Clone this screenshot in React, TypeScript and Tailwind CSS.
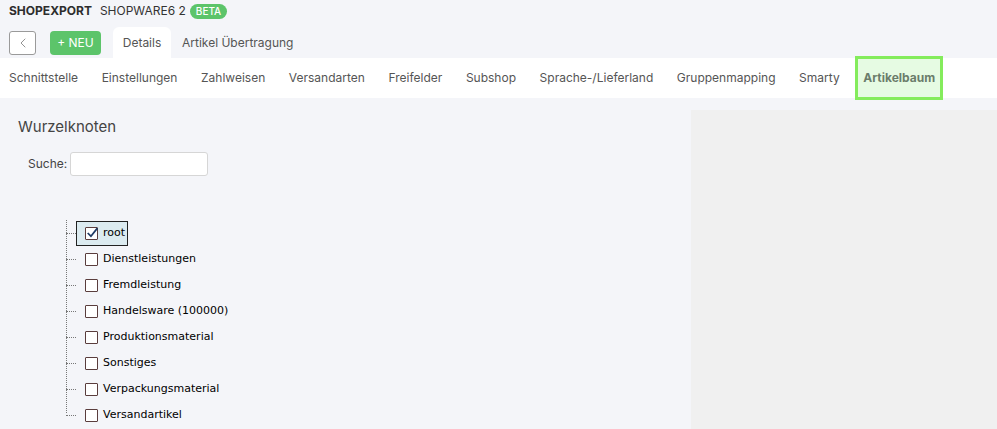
import { ChevronLeft } from "lucide-react";

const tabs = [
  "Schnittstelle",
  "Einstellungen",
  "Zahlweisen",
  "Versandarten",
  "Freifelder",
  "Subshop",
  "Sprache-/Lieferland",
  "Gruppenmapping",
  "Smarty",
];

const nodes = [
  "Dienstleistungen",
  "Fremdleistung",
  "Handelsware (100000)",
  "Produktionsmaterial",
  "Sonstiges",
  "Verpackungsmaterial",
  "Versandartikel",
];

const Box = ({ checked }: { checked?: boolean }) => (
  <span className="relative inline-block w-[13px] h-[13px] border border-[#5a3d3d] bg-white rounded-[1px] shrink-0">
    {checked && (
      <svg viewBox="0 0 13 13" className="absolute -left-px -top-[2px] w-[14px] h-[14px]">
        <path d="M2.5 6.5 L5.5 9.5 L11.5 2" fill="none" stroke="#1f3b64" strokeWidth="1.6" />
      </svg>
    )}
  </span>
);

export default function App() {
  return (
    <div className="w-[997px] h-[429px] overflow-hidden bg-[#f4f5f9] font-['Inter',sans-serif] text-[#333]">
      {/* Title */}
      <div className="flex items-center h-[21px] pl-[9px] pt-[1px] text-[12px]">
        <span className="font-bold text-[#2d2d2d]">SHOPEXPORT</span>
        <span className="ml-[8px] text-[#333]">SHOPWARE6 2</span>
        <span className="ml-[4px] rounded-full bg-[#5cc46a] px-[6px] h-[15px] leading-[15px] text-[10px] font-medium text-white">
          BETA
        </span>
      </div>

      {/* Toolbar */}
      <div className="flex items-end h-[37px] pl-[9px]">
        <div className="flex items-center mb-[3px]">
          <button className="w-[27px] h-[24px] flex items-center justify-center border border-[#9a9a9a] rounded-[3px] bg-white text-[#777]">
            <ChevronLeft className="w-[16px] h-[16px]" strokeWidth={1.2} />
          </button>
          <button className="ml-[14px] w-[51px] h-[24px] rounded-[4px] bg-[#5cc46a] text-white text-[12px]">
            + NEU
          </button>
        </div>
        <div className="ml-[12px] h-[31px] w-[58px] bg-white rounded-t-[6px] flex items-center justify-center text-[12px] text-[#555]">
          Details
        </div>
        <div className="ml-[11px] h-[31px] flex items-center text-[12px] text-[#555]">
          Artikel Übertragung
        </div>
      </div>

      {/* Tab bar */}
      <div className="h-[40px] bg-white flex items-center pl-[9px] gap-[23.6px] text-[12px] text-[#555]">
        {tabs.map((t) => (
          <span key={t}>{t}</span>
        ))}
        <span className="-mx-2 h-[44px] px-[5px] flex items-center border-[3px] border-[#84ec5c] bg-[#e6fbe3] font-bold text-[#6b7d6b]">
          Artikelbaum
        </span>
      </div>

      {/* Content */}
      <div className="flex">
        <div className="w-[691px] pl-[18px] pt-[19px]">
          <div className="text-[15px] text-[#444] leading-[20px]">Wurzelknoten</div>
          <div className="flex items-center mt-[15px] pl-[10px]">
            <span className="text-[12px] text-[#444]">Suche:</span>
            <input className="ml-[3px] w-[138px] h-[24px] bg-white border border-[#d6d6d6] rounded-[3px]" />
          </div>

          {/* Tree */}
          <div className="relative mt-[44px] ml-[48px] font-['DejaVu_Sans','Verdana',sans-serif] text-[11px] text-black">
            <div className="absolute left-0 top-0 h-[193px] border-l border-dotted border-[#777]" />
            <div className="flex items-center h-[26px]">
              <span className="w-[10px] border-t border-dotted border-[#777]" />
              <span className="flex items-center gap-[5px] h-[25px] pl-[8px] pr-[2px] border border-[#222] bg-[#dcebf0]">
                <Box checked />
                <span>root</span>
              </span>
            </div>
            {nodes.map((n) => (
              <div key={n} className="flex items-center h-[26px]">
                <span className="w-[10px] border-t border-dotted border-[#777]" />
                <span className="flex items-center gap-[5px] px-[9px]">
                  <Box />
                  <span>{n}</span>
                </span>
              </div>
            ))}
          </div>
        </div>
        <div className="flex-1 mt-[12px] h-[400px] bg-[#f0f0f0]" />
      </div>
    </div>
  );
}
